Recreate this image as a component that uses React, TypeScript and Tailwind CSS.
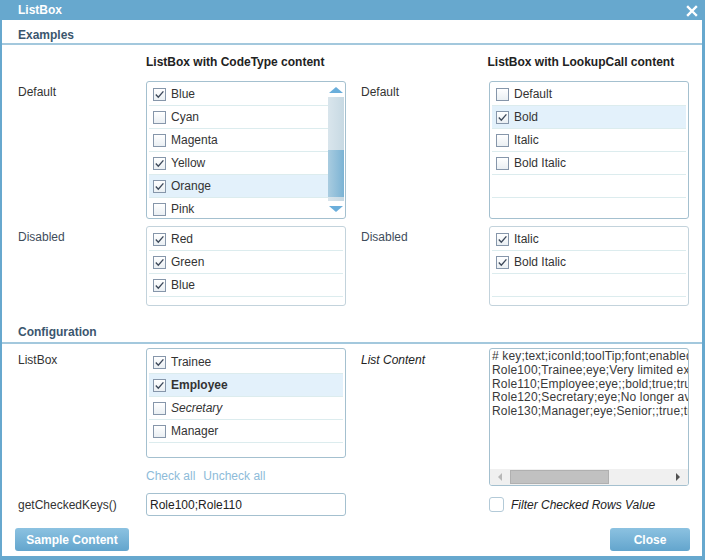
import React from "react";

function Check({ checked }: { checked: boolean }) {
  return (
    <div className="w-[13px] h-[13px] shrink-0 border border-[#8696aa] bg-gradient-to-b from-white to-[#eaeff3] flex items-center justify-center">
      {checked && (
        <svg width="11" height="11" viewBox="0 0 11 11">
          <polyline points="1.8,5.6 4.3,8.2 9.4,2.4" fill="none" stroke="#3f4b5c" strokeWidth="1.4" />
        </svg>
      )}
    </div>
  );
}

type RowProps = { checked?: boolean; label?: string; selected?: boolean; bold?: boolean; italic?: boolean };

function Row({ checked = false, label, selected = false, bold = false, italic = false }: RowProps) {
  return (
    <div
      className={`h-[23px] shrink-0 flex items-center pl-[4px] border-b border-[#dcecee] ${selected ? "bg-[#e3f1fb]" : ""}`}
    >
      {label !== undefined && (
        <>
          <Check checked={checked} />
          <span className={`ml-[5px] leading-[14px] ${bold ? "font-bold" : ""} ${italic ? "italic" : ""}`}>{label}</span>
        </>
      )}
    </div>
  );
}

function Box({ children, className }: { children: React.ReactNode; className: string }) {
  return (
    <div className={`w-[200px] border border-[#a4c0cf] rounded-[3px] bg-white overflow-hidden ${className}`}>{children}</div>
  );
}

function VScroll() {
  return (
    <div className="w-[16px] shrink-0 flex flex-col items-center">
      <div className="h-[15px] w-full flex items-center justify-center">
        <div className="w-0 h-0 border-l-[7px] border-r-[7px] border-b-[6px] border-l-transparent border-r-transparent border-b-[#6aaedb]" />
      </div>
      <div className="h-[53px] w-full bg-gradient-to-r from-[#d9e5ec] to-[#c7d9e3]" />
      <div className="h-[47px] w-full bg-gradient-to-r from-[#a9cce0] to-[#7bb3d4]" />
      <div className="h-[4px] w-full bg-gradient-to-r from-[#d9e5ec] to-[#c7d9e3]" />
      <div className="h-[16px] w-full flex items-center justify-center">
        <div className="w-0 h-0 border-l-[7px] border-r-[7px] border-t-[6px] border-l-transparent border-r-transparent border-t-[#6aaedb]" />
      </div>
    </div>
  );
}

export default function App() {
  const lines = [
    "# key;text;iconId;toolTip;font;enabled;active;parentKey",
    "Role100;Trainee;eye;Very limited experience;;true;true;",
    "Role110;Employee;eye;;bold;true;true;",
    "Role120;Secretary;eye;No longer available;italic;true;true;",
    "Role130;Manager;eye;Senior;;true;true;",
  ];
  return (
    <div className="w-[705px] h-[560px] bg-[#67a8ce] flex flex-col font-['Liberation_Sans',Arial,sans-serif] text-[12px] text-[#333333]">
      <div className="h-[20px] shrink-0 flex items-center justify-between pl-[18px] pr-[7px]">
        <span className="text-white font-bold text-[12px] leading-[14px]">ListBox</span>
        <svg width="12" height="12" viewBox="0 0 12 12" className="mt-[1px]">
          <path d="M2 2 L10 10 M10 2 L2 10" stroke="white" strokeWidth="2.4" strokeLinecap="square" />
        </svg>
      </div>
      <div className="flex-1 ml-[2px] mr-[3px] mb-[4px] bg-white flex flex-col">
        <div className="h-[25px] shrink-0 border-b-2 border-[#a3c8dd] pl-[16px] pt-[6px]">
          <span className="font-bold text-[#3b566e] leading-[14px]">Examples</span>
        </div>

        <div className="h-[36px] shrink-0 flex gap-[15px] px-[16px] pt-[10px] leading-[14px] font-bold text-[#222]">
          <div className="w-[328px] pl-[128px]">ListBox with CodeType content</div>
          <div className="w-[328px] pl-[128px]">ListBox with LookupCall content</div>
        </div>

        <div className="h-[138px] shrink-0 flex gap-[15px] px-[16px]">
          <div className="w-[328px] flex">
            <div className="w-[128px] pt-[4px] leading-[14px]">Default</div>
            <Box className="h-[138px] flex">
              <div className="flex-1 flex flex-col pl-[2px] pt-[1px]">
                <Row checked label="Blue" />
                <Row label="Cyan" />
                <Row label="Magenta" />
                <Row checked label="Yellow" />
                <Row checked label="Orange" selected />
                <Row label="Pink" />
              </div>
              <VScroll />
              <div className="w-[1px]" />
            </Box>
          </div>
          <div className="w-[328px] flex">
            <div className="w-[128px] pt-[4px] leading-[14px]">Default</div>
            <Box className="h-[138px] flex flex-col px-[2px] pt-[1px]">
              <Row label="Default" />
              <Row checked label="Bold" selected />
              <Row label="Italic" />
              <Row label="Bold Italic" />
              <Row />
              <Row />
            </Box>
          </div>
        </div>

        <div className="h-[80px] mt-[7px] shrink-0 flex gap-[15px] px-[16px]">
          <div className="w-[328px] flex">
            <div className="w-[128px] pt-[4px] leading-[14px] text-[#3e4c5a]">Disabled</div>
            <Box className="h-[80px] flex flex-col px-[2px] pt-[1px] border-[#c3d3dc]">
              <Row checked label="Red" />
              <Row checked label="Green" />
              <Row checked label="Blue" />
              <Row />
            </Box>
          </div>
          <div className="w-[328px] flex">
            <div className="w-[128px] pt-[4px] leading-[14px] text-[#3e4c5a]">Disabled</div>
            <Box className="h-[80px] flex flex-col px-[2px] pt-[1px] border-[#c3d3dc]">
              <Row checked label="Italic" />
              <Row checked label="Bold Italic" />
              <Row />
              <Row />
            </Box>
          </div>
        </div>

        <div className="h-[38px] shrink-0 border-b-2 border-[#a3c8dd] pl-[16px] pt-[17px]">
          <span className="font-bold text-[#3b566e] leading-[14px]">Configuration</span>
        </div>

        <div className="h-[138px] mt-[4px] shrink-0 flex gap-[15px] px-[16px]">
          <div className="w-[328px] flex">
            <div className="w-[128px] pt-[5px] leading-[14px]">ListBox</div>
            <div className="flex flex-col">
              <Box className="h-[110px] flex flex-col px-[2px] pt-[2px]">
                <Row checked label="Trainee" />
                <Row checked label="Employee" bold selected />
                <Row label="Secretary" italic />
                <Row label="Manager" />
                <Row />
              </Box>
              <div className="mt-[11px] leading-[14px] text-[#8dbbd9] flex gap-[8px]">
                <span>Check all</span>
                <span>Uncheck all</span>
              </div>
            </div>
          </div>
          <div className="w-[328px] flex">
            <div className="w-[128px] pt-[5px] leading-[14px] italic text-[#222]">List Content</div>
            <Box className="h-[138px] flex flex-col">
              <div className="flex-1 overflow-hidden pl-[2px] pr-[2px] pt-[1px] leading-[13.8px] tracking-[0.15px] whitespace-pre text-[#3a3a3a]">
                {lines.map((l) => (
                  <div key={l}>{l}</div>
                ))}
              </div>
              <div className="h-[16px] shrink-0 bg-[#f0f0f0] flex items-center">
                <div className="w-[20px] flex justify-center">
                  <div className="w-0 h-0 border-t-[4px] border-b-[4px] border-r-[4px] border-t-transparent border-b-transparent border-r-[#b8b8b8]" />
                </div>
                <div className="w-[99px] h-[14px] bg-[#c1c1c1] border border-[#b0b0b0]" />
                <div className="flex-1" />
                <div className="w-[20px] flex justify-center">
                  <div className="w-0 h-0 border-t-[4px] border-b-[4px] border-l-[4px] border-t-transparent border-b-transparent border-l-[#505050]" />
                </div>
              </div>
            </Box>
          </div>
        </div>

        <div className="h-[23px] mt-[7px] shrink-0 flex gap-[15px] px-[16px]">
          <div className="w-[328px] flex items-center">
            <div className="w-[128px] leading-[14px]">getCheckedKeys()</div>
            <div className="w-[200px] h-[23px] border border-[#a4c0cf] rounded-[3px] flex items-center pl-[3px] text-[#222]">
              Role100;Role110
            </div>
          </div>
          <div className="w-[328px] flex items-center">
            <div className="w-[128px]" />
            <div className="w-[15px] h-[15px] border border-[#b3cad8] rounded-[3px] bg-white" />
            <span className="ml-[7px] italic leading-[14px] text-[#222]">Filter Checked Rows Value</span>
          </div>
        </div>

        <div className="h-[23px] mt-[12px] shrink-0 flex justify-between pl-[13px] pr-[12px]">
          <div className="w-[114px] h-[23px] rounded-[3px] bg-gradient-to-b from-[#8cc2e1] to-[#63a5cd] flex items-center justify-center text-white font-bold">
            Sample Content
          </div>
          <div className="w-[80px] h-[23px] rounded-[3px] bg-gradient-to-b from-[#8cc2e1] to-[#63a5cd] flex items-center justify-center text-white font-bold">
            Close
          </div>
        </div>
      </div>
    </div>
  );
}
